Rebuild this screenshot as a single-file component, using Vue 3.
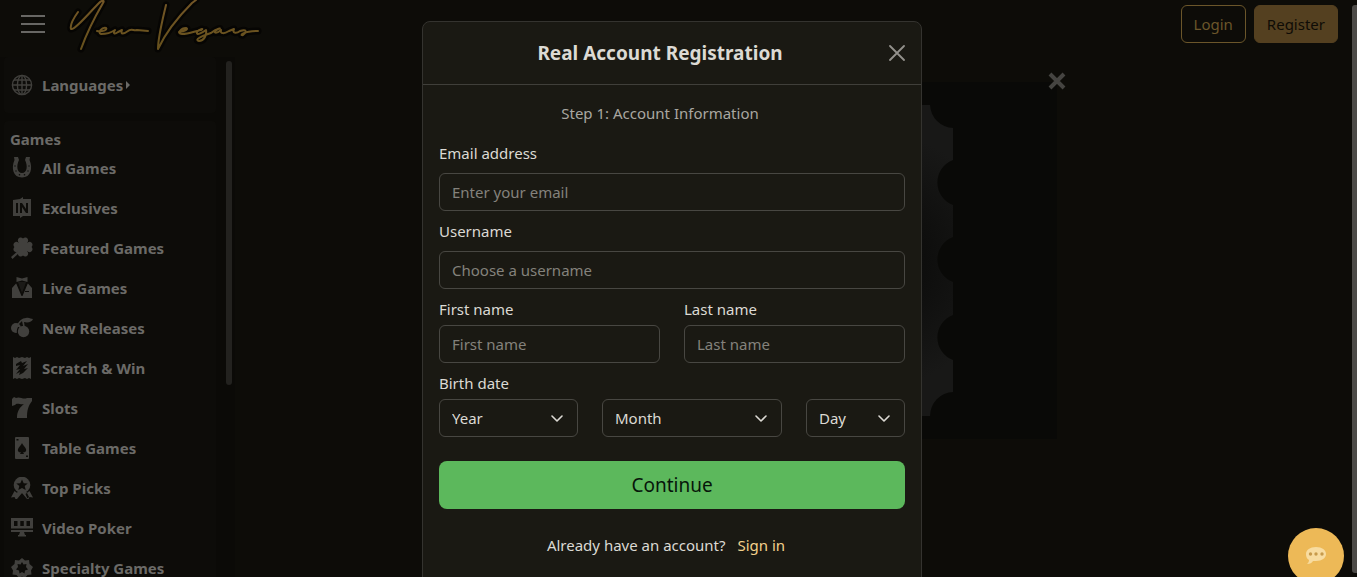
<script setup>
import { ref } from 'vue'

const games = [
  { label: 'All Games', icon: 'horseshoe' },
  { label: 'Exclusives', icon: 'exclusive' },
  { label: 'Featured Games', icon: 'clover' },
  { label: 'Live Games', icon: 'vest' },
  { label: 'New Releases', icon: 'cherry' },
  { label: 'Scratch & Win', icon: 'scratch' },
  { label: 'Slots', icon: 'seven' },
  { label: 'Table Games', icon: 'card' },
  { label: 'Top Picks', icon: 'medal' },
  { label: 'Video Poker', icon: 'screen' },
  { label: 'Specialty Games', icon: 'chip' },
]

const email = ref('')
const username = ref('')
const firstName = ref('')
const lastName = ref('')
const year = ref('Year')
const month = ref('Month')
const day = ref('Day')
const months = ['January', 'February', 'March', 'April', 'May', 'June', 'July', 'August', 'September', 'October', 'November', 'December']
</script>

<template>
  <div class="app">
    <header class="topbar">
      <button class="menu" type="button" aria-label="Menu">
        <svg width="24" height="20" viewBox="0 0 24 20"><path d="M0 2h24M0 10h24M0 18h24" stroke="currentColor" stroke-width="2" /></svg>
      </button>
      <a class="brand" href="#" aria-label="New Vegas">
        <svg width="196" height="56" viewBox="66 0 196 56" fill="none" stroke-linecap="round" stroke-linejoin="round">
          <defs>
            <linearGradient id="gold" x1="0" y1="0" x2="0" y2="50" gradientUnits="userSpaceOnUse">
              <stop offset="0" stop-color="#735626" />
              <stop offset="1" stop-color="#66511c" />
            </linearGradient>
          </defs>
          <g v-for="layer in ['halo', 'ink']" :key="layer" :class="layer">
            <path d="M78 12C73 19 70 26 71 29C74 31 91 11 99 3C102 0 105 0 103 3C96 15 86 35 81 49" />
            <path d="M97 31C102 32 108 30 106 28C102 27 97 33 101 34C107 34 112 32 115 30C113 33 114 35 118 32L122 30C120 35 124 34 128 31C131 28 134 31 137 30L148 31" />
            <path d="M166 5C163 18 158 37 158 49C165 34 178 17 192 3L196 0" />
            <path d="M179 32C185 31 189 29 186 28C181 28 176 34 182 34C189 34 195 31 201 30C205 28 199 29 197 32C196 36 202 33 206 30C207 35 204 41 199 41C194 40 201 36 211 33C217 28 223 28 218 29C212 32 215 35 221 30C220 34 224 34 229 31L234 29C232 33 236 34 240 31C247 29 247 32 243 35C239 36 243 31 258 31" />
          </g>
        </svg>
      </a>
      <nav class="account">
        <button class="btn outline" type="button">Login</button>
        <button class="btn solid" type="button">Register</button>
      </nav>
    </header>

    <div class="columns">
      <aside class="sidebar">
        <div class="panels">
          <section class="panel languages">
            <a class="item" href="#">
              <svg class="icon" viewBox="0 0 22 22" fill="none" stroke="currentColor" stroke-width="1.4">
                <circle cx="11" cy="11" r="9.6" /><ellipse cx="11" cy="11" rx="4.6" ry="9.6" /><path d="M11 1v20M1 11h20M3 6h16M3 16h16" />
              </svg>
              <span>Languages</span>
              <svg class="caret" width="4" height="8" viewBox="0 0 4 8"><path d="M0 0l4 4-4 4z" fill="currentColor" /></svg>
            </a>
          </section>
          <section class="panel">
            <h2 class="heading">Games</h2>
            <a v-for="game in games" :key="game.label" class="item" href="#">
              <svg class="icon" viewBox="0 0 22 22" fill="currentColor">
                <template v-if="game.icon === 'horseshoe'">
                  <path d="M3 0h4l1 3c-3 6-2 13 3 13s6-7 3-13l1-3h4l-.5 3C22 11 20 20.500 11 20.500S0 11 3.500 3z" />
                  <g class="cut"><circle cx="4" cy="9" r=".7" /><circle cx="5" cy="14" r=".7" /><circle cx="8.500" cy="17.700" r=".8" /><circle cx="13.500" cy="17.700" r=".8" /><circle cx="17" cy="14" r=".7" /><circle cx="18" cy="9" r=".7" /></g>
                </template>
                <template v-else-if="game.icon === 'exclusive'">
                  <path d="M2 3l7-1 3-2v2h8v17l-8 0-3 2v-2H2z" />
                  <path class="cut" d="M5 6h2v10H5zM9 6h2l4 6V6h2v10h-2l-4-6v6H9z" />
                </template>
                <template v-else-if="game.icon === 'clover'">
                  <path d="M12 10C9 7 6 5 7 2.500S10.500 0 12 1.500C13.500 0 16 0 17 2.500S15 7 12 10z" />
                  <path d="M12 10c3-3 5-6 7.500-5s2.500 3.500 1 5c1.500 1.500 1.500 4-1 5S15 13 12 10z" />
                  <path d="M12 10c3 3 6 5 5 7.500s-3.500 2.500-5 1c-1.500 1.500-4 1.500-5-1S9 13 12 10z" />
                  <path d="M12 10c-3 3-5 6-7.500 5S2 11.500 3.500 10C2 8.500 2 6 4.500 5S9 7 12 10z" />
                  <path d="M8 5h8v10H8z" />
                  <path d="M8 13L0 20l1.500 2L9 15z" />
                </template>
                <template v-else-if="game.icon === 'vest'">
                  <path d="M5.500 0L11 1.500 16.500 0v5L11 3.500 5.500 5zM5.500 6L11 18l5.500-12L21 11v10H1V11z" />
                  <path d="M7 5h8l-4 12z" class="shirt" />
                  <path class="cut" d="M5 6h1.500L11 16l4.500-10H17l-5.500 13h-1zM14 14h4v1h-4z" />
                </template>
                <template v-else-if="game.icon === 'cherry'">
                  <circle cx="5" cy="11" r="5" /><circle cx="12.500" cy="14.500" r="5.700" />
                  <path d="M6 8C8 4 11 1 15 1c3-1 5 1 7 1-1 3-5 4-9 3l1 6h-1.500L11 4 7 8z" />
                  <path class="cut" d="M7 10h1.500C6.500 13 6.500 15 7.500 18h-1C5.500 15 5.500 13 7 10z" />
                </template>
                <template v-else-if="game.icon === 'scratch'">
                  <path d="M2 0l2 1 2-1 2 1 3-1 3 1 2-1 2 1 2-1v22l-2-1-2 1-2-1-3 1-3-1-2 1-2-1-2 1z" />
                  <path class="cut" d="M5 7l5-3 1 2 5-2-4 5 5-2-4 5 4-1-5 5-4 2 1-3-4 2 4-5-4 1 4-5-4 1z" />
                </template>
                <template v-else-if="game.icon === 'seven'">
                  <path d="M1 2l2-2 2 1c4-2 7 2 11 0h5v3c-4 5-5 10-5 17H6C6 15 8 11 13 7 9 8 6 5 4 8L1 9z" />
                </template>
                <template v-else-if="game.icon === 'card'">
                  <rect x="4" y="0" width="14" height="22" rx="1" />
                  <path class="cut" d="M11 6c1 3 5 5 4 8-1 2-3 1-3 1l1 2H9l1-2s-2 1-3-1c-1-3 3-5 4-8zM5.500 2h2v1.500h-2zM15 18.500h2V20h-2z" />
                </template>
                <template v-else-if="game.icon === 'medal'">
                  <path d="M3.500 14l4 3-2.500 6-1.500-3-3.500.5zM18.500 14l-4 3 2.500 6 1.500-3 3.500.5zM7 14h8l3 6-2 2-5-6-5 6-2-2z" />
                  <circle cx="11" cy="8" r="8.300" />
                  <path d="M11 2.500l1.700 3.700 4 .3-3 2.600 1 4-3.700-2.100-3.700 2.100 1-4-3-2.600 4-.3z" class="cut" />
                </template>
                <template v-else-if="game.icon === 'screen'">
                  <path fill-rule="evenodd" d="M0 1h22v10.500H0zM3 4v5h3.500V4zM9.300 4v5h3.500V4zM15.500 4v5H19V4zM0 13h22v2H0zM9 15h4l1 3h1v1.500H7V18h1z" />
                </template>
                <template v-else>
                  <path fill-rule="evenodd" d="M11 1l3 2.500 4-.5.500 4L22 10l-2 3.500.5 4-4 .5L14 21l-3-1.500L8 21l-2.500-3-4-.5.500-4L0 10l3.500-3L4 3l4 .5zM11 5L9.500 7.500 6.500 7l.5 3-2 2.500 3 1 .5 3 2.500-1.500 2.500 1.500.5-3 3-1-2-2.500.5-3-3 .5z" />
                </template>
              </svg>
              <span>{{ game.label }}</span>
            </a>
          </section>
        </div>
        <div class="side-thumb"></div>
      </aside>

      <main class="stage">
        <div class="banner">
          <svg class="ticket" width="328" height="311" viewBox="0 0 328 311">
            <defs>
              <radialGradient id="shade" cx="250" cy="155" r="170" gradientUnits="userSpaceOnUse">
                <stop offset="0" stop-color="#090907" />
                <stop offset="0.300" stop-color="#0e0e0d" />
                <stop offset="0.750" stop-color="#181817" />
                <stop offset="1" stop-color="#181817" />
              </radialGradient>
            </defs>
            <path fill="url(#shade)" d="M0 0H305A24 24 0 0 0 328 23V55A24 24 0 0 0 328 100V132A24 24 0 0 0 328 177V210A24 24 0 0 0 328 255V287A24 24 0 0 0 305 311H0z" />
          </svg>
          <button class="banner-close" type="button" aria-label="Close banner">
            <svg width="18" height="18" viewBox="0 0 18 18"><path d="M2 2l14 14M16 2L2 16" stroke="currentColor" stroke-width="4" /></svg>
          </button>
        </div>
      </main>
    </div>

    <div class="overlay">
      <form class="dialog" role="dialog" aria-labelledby="dialog-title" @submit.prevent>
        <div class="dialog-head">
          <h1 id="dialog-title">Real Account Registration</h1>
          <button class="close" type="button" aria-label="Close">
            <svg width="16" height="16" viewBox="0 0 16 16"><path d="M1 1l14 14M15 1L1 15" stroke="currentColor" stroke-width="1.800" stroke-linecap="round" /></svg>
          </button>
        </div>
        <div class="dialog-body">
          <p class="step">Step 1: Account Information</p>
          <div class="field">
            <label for="email">Email address</label>
            <input id="email" v-model="email" class="control" type="email" placeholder="Enter your email" />
          </div>
          <div class="field">
            <label for="username">Username</label>
            <input id="username" v-model="username" class="control" type="text" placeholder="Choose a username" />
          </div>
          <div class="names">
            <div class="field tight">
              <label for="first">First name</label>
              <input id="first" v-model="firstName" class="control" type="text" placeholder="First name" />
            </div>
            <div class="field tight">
              <label for="last">Last name</label>
              <input id="last" v-model="lastName" class="control" type="text" placeholder="Last name" />
            </div>
          </div>
          <div class="field tight">
            <label for="year">Birth date</label>
            <div class="dates">
              <div class="picker">
                <select id="year" v-model="year" class="control">
                  <option>Year</option>
                  <option v-for="n in 80" :key="n">{{ 2007 - n }}</option>
                </select>
                <svg class="chevron" viewBox="0 0 12 8"><path d="M1 1l5 5 5-5" /></svg>
              </div>
              <div class="picker">
                <select v-model="month" class="control" aria-label="Month">
                  <option>Month</option>
                  <option v-for="name in months" :key="name">{{ name }}</option>
                </select>
                <svg class="chevron" viewBox="0 0 12 8"><path d="M1 1l5 5 5-5" /></svg>
              </div>
              <div class="picker">
                <select v-model="day" class="control" aria-label="Day">
                  <option>Day</option>
                  <option v-for="n in 31" :key="n">{{ n }}</option>
                </select>
                <svg class="chevron" viewBox="0 0 12 8"><path d="M1 1l5 5 5-5" /></svg>
              </div>
            </div>
          </div>
          <button class="continue" type="submit">Continue</button>
          <p class="signin"><span>Already have an account?</span><a href="#">Sign in</a></p>
        </div>
      </form>
    </div>

    <button class="chat" type="button" aria-label="Chat">
      <svg width="22" height="20" viewBox="0 0 22 20">
        <path d="M11 1C5 1 1 4 1 8c0 3 1 5 3 6 0 2-1 3-2 4 3 0 5-1 6-3h3c6 0 10-3 10-7s-4-7-10-7z" fill="#f8dca0" />
        <g fill="#c79a4b"><circle cx="5.500" cy="8" r="1.700" /><circle cx="11" cy="8" r="1.700" /><circle cx="17" cy="8" r="1.700" /></g>
      </svg>
    </button>
    <div class="page-thumb"></div>
  </div>
</template>

<style>
body {
  background: #0d0c08;
}
</style>

<style scoped>
.app {
  position: relative;
  display: flex;
  flex-direction: column;
  height: 100vh;
  overflow: hidden;
  font-family: "Noto Sans", "Open Sans", sans-serif;
  font-size: 15px;
  line-height: 24px;
  color: #dcdad4;
}
.app *,
.app *::before {
  box-sizing: border-box;
}
button,
input,
select {
  font: inherit;
}
button {
  border: 0;
  padding: 0;
  background: none;
  cursor: pointer;
}
svg {
  display: block;
}
h1,
h2,
p {
  margin: 0;
}
a {
  color: inherit;
  text-decoration: none;
}
.topbar {
  display: flex;
  align-items: flex-start;
  flex: none;
  height: 57px;
  padding-right: 19px;
}
.menu {
  margin: 14px 21px 0;
  color: #686764;
}
.halo {
  stroke: #060503;
  stroke-width: 7;
}
.ink {
  stroke: url(#gold);
  stroke-width: 2;
}
.account {
  display: flex;
  gap: 8px;
  margin: 5px 0 0 auto;
}
.btn {
  height: 38px;
  padding: 0 12px;
  border: 1px solid #6b562a;
  border-radius: 6px;
}
.outline {
  color: #6b562a;
}
.solid {
  border-color: #544020;
  background: #544020;
  color: #0f0c06;
}
.columns {
  display: flex;
  flex: 1;
  min-height: 0;
}
.sidebar {
  display: flex;
  flex: none;
  width: 235px;
  overflow: hidden;
  background: #0b0a07;
  color: #6b6a67;
}
.panels {
  display: flex;
  flex-direction: column;
  gap: 8px;
  width: 216px;
  padding-left: 4px;
}
.panel {
  flex: none;
  padding: 7px 6px;
  border-radius: 4px;
  background: #0d0c09;
}
.languages {
  padding: 8px 6px;
}
.heading {
  font-size: 15px;
  line-height: 22px;
}
.item {
  display: flex;
  align-items: center;
  height: 40px;
  font-weight: 700;
}
.panel .heading + .item {
  margin-top: -2px;
}
.icon {
  width: 24px;
  height: 22px;
  margin-right: 8px;
  color: #41403d;
}
.cut {
  fill: #0d0c09;
}
.shirt {
  fill: #1b1a17;
}
.caret {
  margin-left: 3px;
}
.side-thumb {
  width: 6px;
  height: 324px;
  margin: 4px 0 0 10px;
  border-radius: 3px;
  background: #23221f;
}
.stage {
  display: flex;
  flex: 1;
  justify-content: center;
  align-items: flex-start;
  padding: 25px 15px 0 0;
}
.banner {
  position: relative;
  width: 536px;
  padding: 23px 104px;
  background: #090907;
}
.banner-close {
  position: absolute;
  top: -10px;
  right: -9px;
  color: #454441;
}
.overlay {
  position: absolute;
  inset: 0 13px 0 0;
  display: flex;
  justify-content: center;
  align-items: flex-start;
  padding-top: 21px;
  overflow: hidden;
}
.dialog {
  width: 500px;
  border: 1px solid #34332f;
  border-radius: 8px;
  background: #1a1913;
}
.dialog-head {
  display: flex;
  align-items: center;
  padding: 16px;
  border-bottom: 1px solid #403f3a;
}
h1 {
  flex: 1;
  font-size: 19px;
  line-height: 30px;
  text-align: center;
}
.close {
  margin: -8px -8px -8px 0;
  padding: 8px;
  color: #93918c;
}
.dialog-body {
  padding: 16px 16px 32px;
}
.step {
  padding-right: 24px;
  margin-bottom: 16px;
  text-align: center;
  color: #a9a7a1;
}
.field {
  display: flex;
  flex-direction: column;
  gap: 8px;
  margin-bottom: 8px;
}
.tight {
  gap: 4px;
}
.names {
  display: grid;
  grid-template-columns: 1fr 1fr;
  gap: 24px;
  margin-bottom: 8px;
}
.names .field {
  margin-bottom: 0;
}
.control {
  width: 100%;
  height: 38px;
  padding: 0 12px;
  border: 1px solid #484742;
  border-radius: 6px;
  background: transparent;
  color: #dcdad4;
  appearance: none;
}
.control::placeholder {
  color: #84827c;
  opacity: 1;
}
.control option {
  background: #1a1913;
}
.dates {
  display: grid;
  grid-template-columns: 139fr 180fr 99fr;
  gap: 24px;
}
.picker {
  position: relative;
}
.chevron {
  position: absolute;
  top: 16px;
  right: 15px;
  width: 12px;
  height: 8px;
  fill: none;
  stroke: #dcdad4;
  stroke-width: 1.6;
  stroke-linecap: round;
  stroke-linejoin: round;
  pointer-events: none;
}
.continue {
  width: 100%;
  height: 48px;
  margin-top: 16px;
  border-radius: 8px;
  background: #5cb85c;
  color: #07150a;
  font-size: 19px;
}
.signin {
  display: flex;
  justify-content: center;
  margin-top: 24px;
}
.signin a {
  padding: 0 12px;
  color: #f3d18c;
}
.chat {
  position: absolute;
  right: 13px;
  bottom: -7px;
  display: grid;
  place-items: center;
  width: 56px;
  height: 56px;
  border-radius: 50%;
  background: #edb957;
}
.page-thumb {
  position: absolute;
  top: 5px;
  right: 0;
  bottom: 4px;
  width: 5px;
  border-radius: 3px 0 0 3px;
  background: #4d4b48;
}
</style>
